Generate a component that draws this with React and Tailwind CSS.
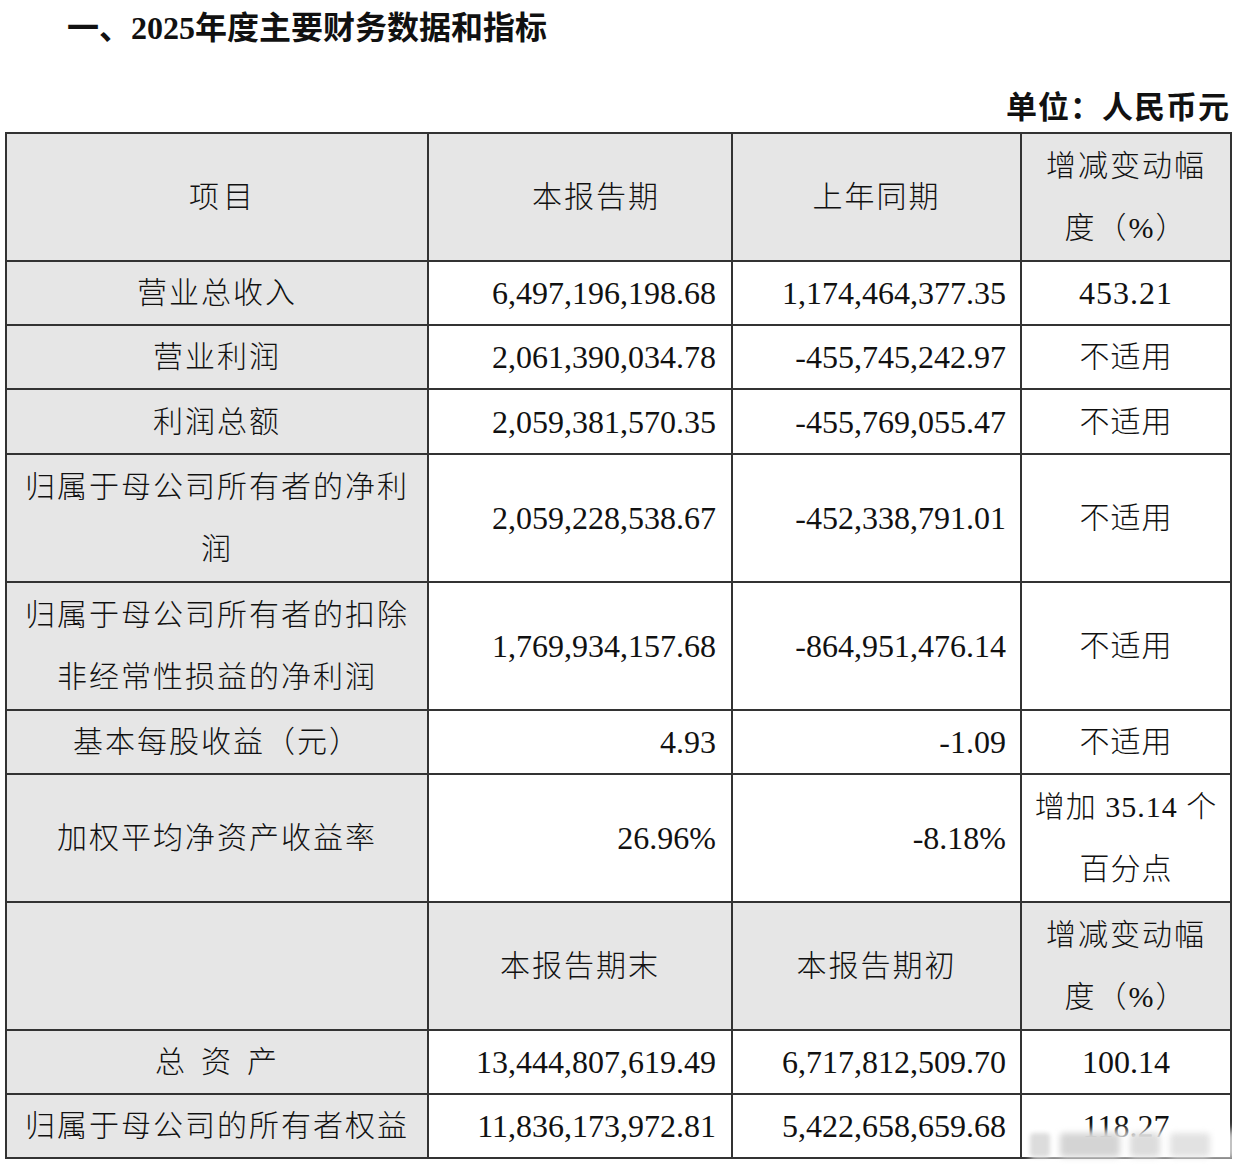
import React from "react";

const F = { fontFamily: "'Liberation Serif', 'Noto Sans CJK SC', serif" };

const rows = [
  { name: ["营业总收入"], a: "6,497,196,198.68", b: "1,174,464,377.35", c: ["453.21"], h: "h-[64px]" },
  { name: ["营业利润"], a: "2,061,390,034.78", b: "-455,745,242.97", c: ["不适用"], h: "h-[64px]" },
  { name: ["利润总额"], a: "2,059,381,570.35", b: "-455,769,055.47", c: ["不适用"], h: "h-[65px]" },
  { name: ["归属于母公司所有者的净利", "润"], a: "2,059,228,538.67", b: "-452,338,791.01", c: ["不适用"], h: "h-[128px]" },
  { name: ["归属于母公司所有者的扣除", "非经常性损益的净利润"], a: "1,769,934,157.68", b: "-864,951,476.14", c: ["不适用"], h: "h-[128px]" },
  { name: ["基本每股收益（元）"], a: "4.93", b: "-1.09", c: ["不适用"], h: "h-[64px]" },
  { name: ["加权平均净资产收益率"], a: "26.96%", b: "-8.18%", c: ["增加 35.14 个", "百分点"], h: "h-[128px]" },
];

const rows2 = [
  { name: ["总 资 产"], a: "13,444,807,619.49", b: "6,717,812,509.70", c: ["100.14"], wide: true },
  { name: ["归属于母公司的所有者权益"], a: "11,836,173,972.81", b: "5,422,658,659.68", c: ["118.27"] },
];

const bd = "border-[2px] border-[#333333]";
const txt = "text-[30px] leading-[62px] text-[#111111] font-light";
const num = "text-[32px] leading-[62px] text-[#111111]";

function Lines({ lines, cls = "" }) {
  return (
    <>
      {lines.map((l, i) => (
        <div key={i} className={cls}>{l}</div>
      ))}
    </>
  );
}

export default function App() {
  return (
    <div style={F} className="w-[1249px] h-[1175px] bg-white relative overflow-hidden">
      <div className="h-[58px] pl-[67px] pt-[8px] text-[32px] leading-[40px] font-bold text-[#111]">
        一、2025年度主要财务数据和指标
      </div>
      <div className="h-[74px] flex justify-end items-end pr-[19px] pb-[4px]">
        <span className="text-[31px] leading-[40px] font-bold text-[#111] tracking-[1px]">单位：人民币元</span>
      </div>
      <table className="ml-[5px] w-[1225px] table-fixed border-collapse">
        <colgroup>
          <col className="w-[422px]" />
          <col className="w-[304px]" />
          <col className="w-[289px]" />
          <col className="w-[210px]" />
        </colgroup>
        <tbody>
          <tr className="h-[128px] bg-[#e6e6e6]">
            <td className={`${bd} ${txt} text-center tracking-[4px] pl-[12px]`}>项目</td>
            <td className={`${bd} ${txt} text-center tracking-[2px] pl-[32px]`}>本报告期</td>
            <td className={`${bd} ${txt} text-center tracking-[2px]`}>上年同期</td>
            <td className={`${bd} ${txt} text-center tracking-[2px]`}>
              <Lines lines={["增减变动幅", "度（%）"]} />
            </td>
          </tr>
          {rows.map((r, i) => (
            <tr key={i} className={r.h}>
              <td className={`${bd} ${txt} bg-[#e6e6e6] text-center tracking-[2px] px-[4px]`}>
                <Lines lines={r.name} />
              </td>
              <td className={`${bd} ${num} text-right pr-[15px]`}>{r.a}</td>
              <td className={`${bd} ${num} text-right pr-[14px]`}>{r.b}</td>
              <td className={`${bd} ${txt} text-center tracking-[1px] whitespace-nowrap`}>
                {r.c.map((l, j) => (
                  <div key={j} className={/^[0-9.]+$/.test(l) ? "text-[32px] font-normal" : ""}>{l}</div>
                ))}
              </td>
            </tr>
          ))}
          <tr className="h-[128px] bg-[#e6e6e6]">
            <td className={`${bd} ${txt}`}></td>
            <td className={`${bd} ${txt} text-center tracking-[2px]`}>本报告期末</td>
            <td className={`${bd} ${txt} text-center tracking-[2px]`}>本报告期初</td>
            <td className={`${bd} ${txt} text-center tracking-[2px]`}>
              <Lines lines={["增减变动幅", "度（%）"]} />
            </td>
          </tr>
          {rows2.map((r, i) => (
            <tr key={i} className="h-[64px]">
              <td className={`${bd} ${txt} bg-[#e6e6e6] text-center tracking-[2px]`}>
                {r.wide ? (
                  <span className="inline-flex gap-[14px]"><span>总</span><span>资</span><span>产</span></span>
                ) : (
                  r.name[0]
                )}
              </td>
              <td className={`${bd} ${num} text-right pr-[15px]`}>{r.a}</td>
              <td className={`${bd} ${num} text-right pr-[14px]`}>{r.b}</td>
              <td className={`${bd} ${num} text-center`}>{r.c[0]}</td>
            </tr>
          ))}
        </tbody>
      </table>
      <div className="absolute left-[1030px] top-[1130px] w-[310px] h-[30px] flex items-center gap-[10px] pointer-events-none">
        <div className="absolute inset-0 bg-white/70 blur-[4px]" />
        <div className="relative w-[20px] h-[24px] bg-[#dcdcdc] blur-[2px] rounded" />
        <div className="relative w-[60px] h-[24px] bg-[#d4d4d4] blur-[3px] rounded" />
        <div className="relative w-[30px] h-[24px] bg-[#dcdcdc] blur-[3px] rounded" />
        <div className="relative w-[40px] h-[24px] bg-[#e2e2e2] blur-[3px] rounded" />
      </div>
    </div>
  );
}
